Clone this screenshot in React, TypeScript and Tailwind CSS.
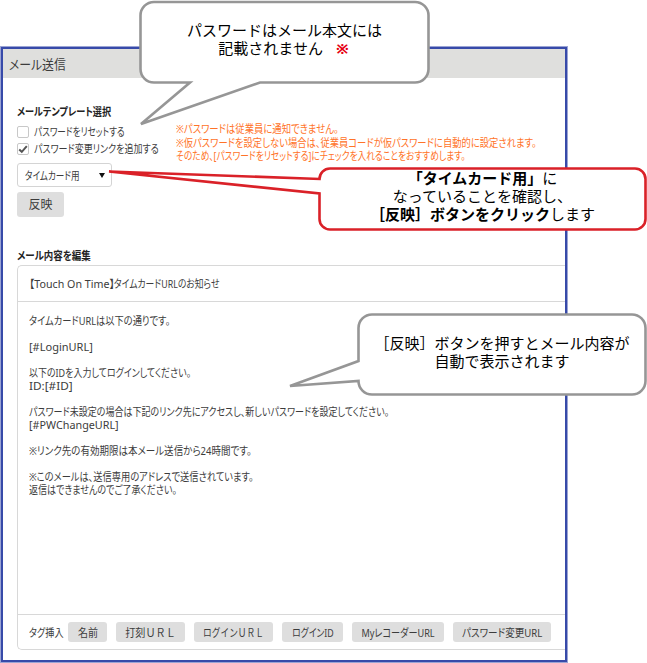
import React from 'react'

interface TextI {
  children: React.ReactNode;
  className?: string;
}

function Text({ children, className = '' }: TextI) {
  return <span className={`inline-block whitespace-pre origin-left ${className}`}>{children}</span>
}

function Checkbox({ checked = false }: { checked?: boolean }) {
  return (
    <span className="w-3 h-3 border border-[#c8c8c8] rounded-[2px] bg-white flex items-center justify-center">
      {checked && (
        <svg xmlns="http://www.w3.org/2000/svg" width="10" height="10" viewBox="0 0 10 10" fill="none">
          <path d="M1.2 5.4L3.8 7.8L8.8 2.2" stroke="#555" strokeWidth="2" />
        </svg>
      )}
    </span>
  )
}

const tags = [
  { label: '名前', width: 'w-[39px]', scale: 'scale-x-[.91]' },
  { label: '打刻ＵＲＬ', width: 'w-[69px]', scale: "scale-x-[.92] [font-feature-settings:'palt'_0]" },
  { label: 'ログインＵＲＬ', width: 'w-[79px]', scale: "scale-x-[.79] [font-feature-settings:'palt'_0]" },
  { label: 'ログインID', width: 'w-[61px]', scale: 'scale-x-[.8]' },
  { label: 'MyレコーダーURL', width: 'w-[92px]', scale: 'scale-x-[.83]' },
  { label: 'パスワード変更URL', width: 'w-[98px]', scale: 'scale-x-[.87]' },
]

export default function App() {
  return (
    <div className="relative w-[647px] h-[663px] pt-[47px] pl-px bg-white overflow-hidden font-['Noto_Sans','Noto_Sans_CJK_JP',sans-serif] text-[11px] leading-[13px] text-[#3c3c3c]">
      <main className="w-[566px] h-[615px] border-2 border-[#374aa9] outline outline-[#374aa9]/50 flex flex-col [font-feature-settings:'palt']">
        <header className="h-[29px] shrink-0 bg-[#dfdfdd] pl-[6px] flex items-center">
          <Text className="text-[13px] leading-5 scale-x-[.91]">メール送信</Text>
        </header>

        <section className="h-[187px] shrink-0 pl-[14px] pt-[27px] flex flex-col">
          <h2 className="h-[13px] font-bold text-[#222]"><Text className="scale-x-[.83]">メールテンプレート選択</Text></h2>
          <div className="flex pt-[5px]">
            <div className="w-[159px] flex flex-col pt-[2px] gap-1">
              <label className="h-[13px] flex items-center gap-[5px]">
                <Checkbox />
                <Text className="scale-x-[.78]">パスワードをリセットする</Text>
              </label>
              <label className="h-[13px] flex items-center gap-[5px]">
                <Checkbox checked />
                <Text className="scale-x-[.82]">パスワード変更リンクを追加する</Text>
              </label>
            </div>
            <div className="flex flex-col items-start -mt-px text-[#ff7328] w-[370px]">
              <Text className="scale-x-[.85] leading-[14px]">※パスワードは従業員に通知できません。</Text>
              <Text className="scale-x-[.845] leading-[13px]">※仮パスワードを設定しない場合は、従業員コードが仮パスワードに自動的に設定されます。</Text>
              <Text className="scale-x-[.792] leading-[14px]">そのため、[パスワードをリセットする]にチェックを入れることをおすすめします。</Text>
            </div>
          </div>
          <div className="w-[95px] h-6 shrink-0 border border-[#d4d4d4] rounded-[3px] pl-[7px] pr-[6px] flex items-center justify-between">
            <Text className="scale-x-[.78] w-[60px]">タイムカード用</Text>
            <svg width="6" height="5" viewBox="0 0 6 5"><path d="M0 0H6L3 5Z" fill="#111" /></svg>
          </div>
          <button className="mt-[5px] w-[47px] h-[25px] shrink-0 bg-[#dedede] rounded-[3px] text-[12px]">反映</button>
        </section>

        <h2 className="h-[13px] mt-[-16px] ml-[14px] font-bold text-[#222]"><Text className="scale-x-[.86]">メール内容を編集</Text></h2>

        <section className="ml-[14px] mt-[3px] h-[385px] shrink-0 border border-r-0 border-[#d8d8d8] rounded-l-[5px] flex flex-col">
          <div className="h-[36px] shrink-0 border-b border-[#d8d8d8] pl-[11px] flex items-center">
            <Text className="w-[85px]"><Text className="scale-x-[.97]">【Touch On Time】</Text></Text>
            <Text className="scale-x-[.8]">タイムカードURLのお知らせ</Text>
          </div>
          <div className="flex-1 pl-[11px] pt-[12px] flex flex-col items-start">
            <Text className="scale-x-[.84]">タイムカードURLは以下の通りです。</Text>
            <Text className="mt-[13px]">[#LoginURL]</Text>
            <Text className="mt-[13px] scale-x-[.815]">以下のIDを入力してログインしてください。</Text>
            <Text className="scale-x-[1.07]">ID:[#ID]</Text>
            <Text className="mt-[13px] scale-x-[.82]">パスワード未設定の場合は下記のリンク先にアクセスし、新しいパスワードを設定してください。</Text>
            <Text className="scale-x-[.98]">[#PWChangeURL]</Text>
            <Text className="mt-[13px] scale-x-[.865]">※リンク先の有効期限は本メール送信から24時間です。</Text>
            <Text className="mt-[13px] scale-x-[.84]">※このメールは、送信専用のアドレスで送信されています。</Text>
            <Text className="scale-x-[.82]">返信はできませんのでご了承ください。</Text>
          </div>
          <footer className="h-[35px] shrink-0 border-t border-[#d8d8d8] pl-[11px] flex items-center">
            <Text className="scale-x-[.83] w-[39px]">タグ挿入</Text>
            <div className="flex gap-[9px]">
              {tags.map((tag) => (
                <button key={tag.label} className={`${tag.width} h-5 bg-[#dedede] rounded-[3px] flex items-center justify-center`}>
                  <span className={`whitespace-pre ${tag.scale}`}>{tag.label}</span>
                </button>
              ))}
            </div>
          </footer>
        </section>
      </main>

      <svg className="absolute inset-0" width="647" height="663" viewBox="0 0 647 663" fill="white" strokeWidth="2.6">
        <path d="M154 2H415A13.5 13.5 0 0 1 428.5 15.5V69A13.5 13.5 0 0 1 415 82.5H260L141 124L190 82.5H154A13.5 13.5 0 0 1 140.5 69V15.5A13.5 13.5 0 0 1 154 2Z" stroke="#969696" />
        <path d="M330 168.5H635A10.5 10.5 0 0 1 645.5 179V219A10.5 10.5 0 0 1 635 229.5H330A10.5 10.5 0 0 1 319.5 219V193.5L109 171.5L319.5 179A10.5 10.5 0 0 1 330 168.5Z" stroke="#da2128" />
        <path d="M372 314.5H632A13.5 13.5 0 0 1 645.5 328V381A13.5 13.5 0 0 1 632 394.5H372A13.5 13.5 0 0 1 358.5 381L290 386L358.5 361V328A13.5 13.5 0 0 1 372 314.5Z" stroke="#969696" />
      </svg>

      <div className="absolute left-[140px] top-[21px] w-[289px] text-center text-[15px] leading-[18px] text-black">
        <p>パスワードはメール本文には</p>
        <p className="pr-[2px]">記載されません<span className="ml-[13px] font-bold text-[#e60012]">※</span></p>
      </div>
      <div className="absolute left-[320px] top-[169px] w-[325px] text-center text-[15px] leading-[18px] text-black">
        <p><b>「タイムカード用」</b>に</p>
        <p>なっていることを確認し、</p>
        <p><b>［反映］ボタンをクリック</b>します</p>
      </div>
      <div className="absolute left-[359px] top-[334px] w-[286px] text-center text-[15px] leading-[18px] text-black">
        <p>［反映］ボタンを押すとメール内容が</p>
        <p>自動で表示されます</p>
      </div>
    </div>
  )
}
